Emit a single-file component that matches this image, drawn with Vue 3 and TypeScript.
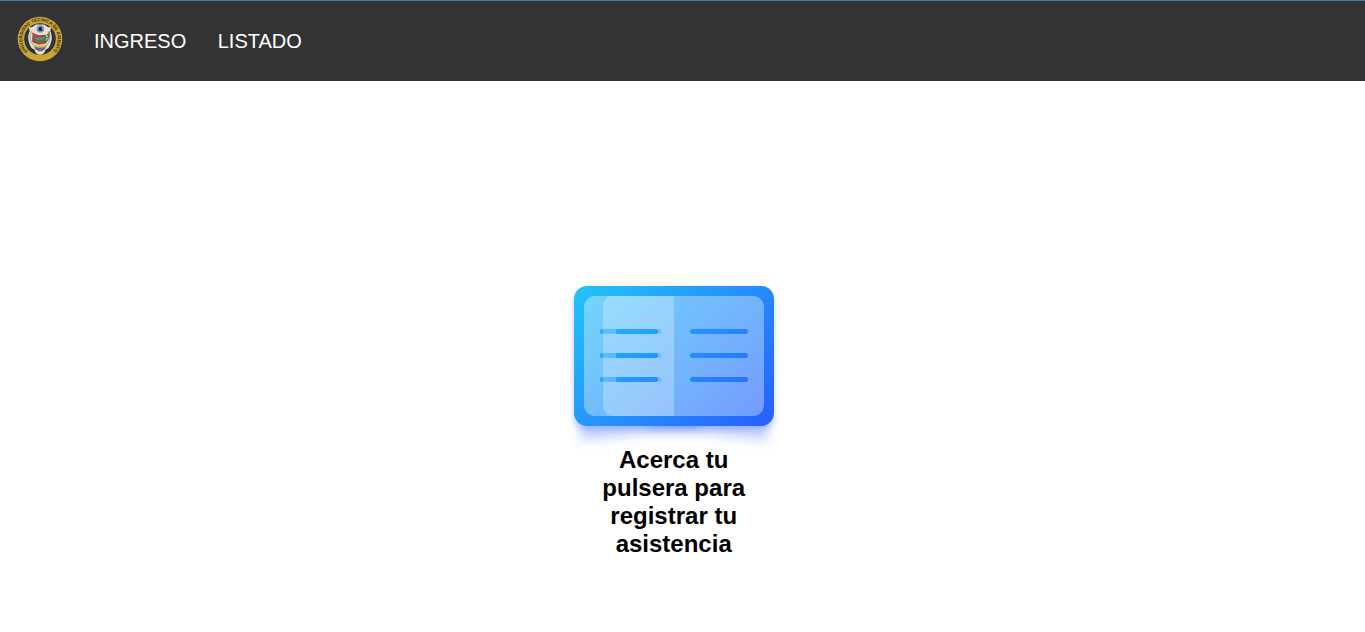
<script setup lang="ts">
const links: string[] = ['INGRESO', 'LISTADO']
const message: string = 'Acerca tu pulsera para registrar tu asistencia'
const page: string =
  'M90,0 V120 H11 A11,11 0 0 1 0,109 V11 A11,11 0 0 1 11,0 Z ' +
  [33, 57, 81]
    .map((y) => `M71.5,${y} H18.5 a2.5,2.5 0 0 0 0,5 H71.5 a2.5,2.5 0 0 0 0,-5 Z`)
    .join(' ')
</script>

<template>
  <div class="app">
    <header class="navbar">
      <svg class="logo" viewBox="0 0 46 46" aria-hidden="true">
        <circle cx="23" cy="23" r="22.3" fill="#c9a536" />
        <circle cx="23" cy="23" r="15.8" fill="#303236" />
        <defs>
          <path id="seal-arc" d="M10.5,35.5 A17.7,17.7 0 1 1 35.5,35.5" />
        </defs>
        <text class="seal">
          <textPath href="#seal-arc" textLength="82">UNIVERSIDAD TECNICA DE AMBATO</textPath>
        </text>
        <path
          d="M11.8,11.5 Q16,11.5 19,8.5 H27 Q30,11.5 34.2,11.5 L33.3,15 Q36,21 33.8,27 Q32.5,32.5 28.5,33.5 Q27.5,38.5 23,38.8 Q18.5,38.5 17.5,33.5 Q13.5,32.5 12.2,27 Q10,21 12.7,15 Z"
          fill="#e4e0d2"
        />
        <path d="M14.2,15 Q12,21 14.2,26.5 Q17,32 23,32.5 Q29,32 31.8,26.5 Q34,21 31.8,15" fill="none" stroke="#7c7e74" stroke-width=".6" />
        <circle cx="23.4" cy="13" r="3.8" fill="#8593bd" />
        <path d="M21.7,15 v-3 q1.7,-2.7 3.4,0 v3 Z" fill="#202b4b" />
        <path d="M16,17.5 l4,1 3,1 6.5,-.3 -.5,7.5 -6,1.2 -7.5,-2 Z" fill="#368052" />
        <path d="M14.8,16.2 l6.2,3.1 7.5,-.5 v2 l-7.6,.7 -5.2,-2.5 Z M15,24.5 l6,1.8 8,-1 v2.2 l-7,1.3 -6,-2 Z M15.8,17 l2.2,1 -.8,7 -2.2,-.3 Z" fill="#bd3e4e" />
        <path d="M18.5,22.2 l2.5,1 1.5,-1 2,1 2.5,-1.2" fill="none" stroke="#aaa99a" stroke-width=".9" />
        <path d="M31.8,16.5 Q33,21 28.8,26.5 M30,18 l2,2 M29.5,21 l2.5,1" fill="none" stroke="#447343" stroke-width="1.3" />
        <path d="M15.5,28 Q23,31.5 31,28 L29.4,31 Q23,33 17,31 Z" fill="#d4ba3d" />
        <path d="M17,30.7 Q23,33 29.3,30.7 L27,34 H19 Z" fill="#52699b" />
        <path d="M20,33.8 h6.5 l-1,1.7 h-4.5 Z" fill="#c56252" />
      </svg>
      <nav class="links">
        <a v-for="link in links" :key="link" class="link">{{ link }}</a>
      </nav>
    </header>

    <main class="content">
      <div class="loader">
        <div class="book">
          <svg class="pages" viewBox="0 0 180 120">
            <path class="leaf" :d="page" />
            <path class="leaf" :d="page" transform="translate(180 0) scale(-1 1)" />
            <path class="fold" :d="page" transform="translate(19 0) scale(.7889 1)" />
          </svg>
        </div>
        <h2 class="message">{{ message }}</h2>
      </div>
    </main>
  </div>
</template>

<style>
body {
  margin: 0;
  background: #fff;
}
</style>

<style scoped>
.app {
  height: 632px;
  overflow: hidden;
  font-family: "Liberation Sans", Arial, sans-serif;
}
.navbar {
  box-sizing: border-box;
  height: 81px;
  border-top: 1px solid #4a73ad;
  background: #333;
  display: flex;
  align-items: center;
  padding: 0 17px 3px;
}
.logo {
  width: 46px;
  height: 46px;
  flex: none;
  margin-bottom: 1px;
}
.seal {
  fill: #30290f;
  font-size: 4.5px;
  font-weight: bold;
}
.links {
  display: flex;
  gap: 31.5px;
  margin-left: 31px;
  padding-top: 3px;
}
.link {
  color: #fff;
  font-size: 20px;
  line-height: 23px;
}
.content {
  display: flex;
  justify-content: center;
  padding: 205px 17px 0 0;
}
.loader {
  width: 200px;
  isolation: isolate;
}
.book {
  position: relative;
  box-sizing: border-box;
  width: 200px;
  height: 140px;
  padding: 10px;
  border-radius: 13px;
  background: linear-gradient(135deg, #23c4f8, #275efe);
  box-shadow: 0 4px 6px rgba(39, 94, 254, 0.28);
}
.book::before,
.book::after {
  content: "";
  position: absolute;
  z-index: -1;
  top: 80%;
  bottom: 8px;
  width: 120px;
  box-shadow: 0 16px 12px rgba(39, 94, 254, 0.28);
}
.book::before {
  left: 4px;
  transform: rotate(-6deg);
}
.book::after {
  right: 4px;
  transform: rotate(6deg);
}
.pages {
  display: block;
  width: 180px;
  height: 120px;
}
.leaf {
  fill: rgba(255, 255, 255, 0.36);
}
.fold {
  fill: rgba(255, 255, 255, 0.26);
}
.message {
  margin: 20px 0 0;
  padding: 0 20.3px 0 19.7px;
  color: #000;
  font-size: 24px;
  line-height: 28px;
  font-weight: bold;
  text-align: center;
  position: relative;
}
</style>
